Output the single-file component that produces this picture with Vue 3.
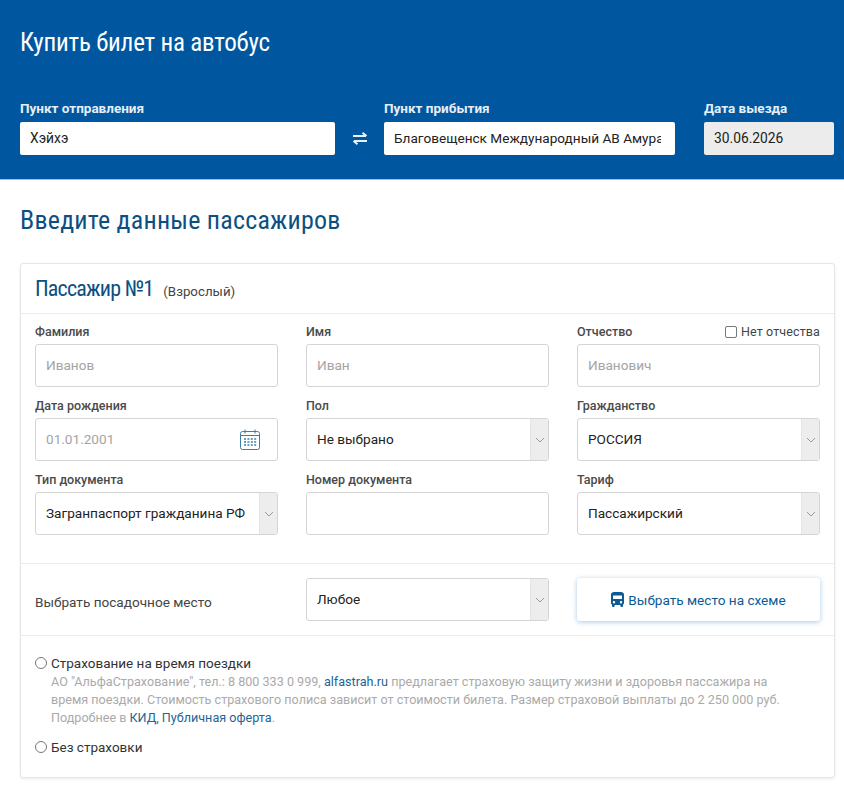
<script setup>
const fields = [
  { label: 'Фамилия', placeholder: 'Иванов' },
  { label: 'Имя', placeholder: 'Иван' },
  { label: 'Отчество', placeholder: 'Иванович', noMiddle: true },
  { label: 'Дата рождения', placeholder: '01.01.2001', date: true },
  { label: 'Пол', value: 'Не выбрано', select: true },
  { label: 'Гражданство', value: 'РОССИЯ', select: true },
  { label: 'Тип документа', value: 'Загранпаспорт гражданина РФ', select: true },
  { label: 'Номер документа', value: '' },
  { label: 'Тариф', value: 'Пассажирский', select: true }
]
</script>

<template>
  <div class="page">
    <header class="hero">
      <h1 class="hero-title">Купить билет на автобус</h1>
      <div class="search">
        <div class="search-field from">
          <label class="search-label">Пункт отправления</label>
          <div class="search-input">Хэйхэ</div>
        </div>
        <div class="swap">
          <svg width="16" height="13" viewBox="0 0 16 13" fill="none" stroke="#eaf1f7" stroke-width="2">
            <path d="M1 4h13M10.500 .8 14.500 4" />
            <path d="M15 9H2M5.500 12.200 1.500 9" />
          </svg>
        </div>
        <div class="search-field to">
          <label class="search-label">Пункт прибытия</label>
          <div class="search-input"><span class="clip">Благовещенск Международный АВ Амура</span></div>
        </div>
        <div class="search-field when">
          <label class="search-label">Дата выезда</label>
          <div class="search-input disabled">30.06.2026</div>
        </div>
      </div>
    </header>

    <main class="content">
      <h2 class="section-title">Введите данные пассажиров</h2>

      <section class="card">
        <div class="card-head">
          <span class="card-title">Пассажир №1</span>
          <span class="card-sub">(Взрослый)</span>
        </div>

        <div class="grid">
          <div v-for="f in fields" :key="f.label" class="field">
            <div class="field-top">
              <label class="field-label">{{ f.label }}</label>
              <span v-if="f.noMiddle" class="check-wrap"><i class="check"></i>Нет отчества</span>
            </div>
            <div class="control">
              <span v-if="f.placeholder" class="placeholder">{{ f.placeholder }}</span>
              <span v-else class="value">{{ f.value }}</span>
              <svg v-if="f.date" class="cal" width="20" height="21" viewBox="0 0 20 21" fill="none" stroke="#3d7ea6" stroke-width="1">
                <rect x=".5" y="2.500" width="19" height="18" rx="2" />
                <path d="M.5 6.500h19M5 .5v4M15 .5v4" />
                <path stroke-width="1.500" stroke-dasharray="2 1.400" d="M4 10h12.500M4 13h12.500M4 16h12.500" />
              </svg>
              <span v-if="f.select" class="arrow">
                <svg width="10" height="6" viewBox="0 0 10 6" fill="none" stroke="#9a9a9a" stroke-width="1"><path d="M1 1l4 4 4-4" /></svg>
              </span>
            </div>
          </div>
        </div>

        <div class="seat-row">
          <span class="seat-label">Выбрать посадочное место</span>
          <div class="control">
            <span class="value">Любое</span>
            <span class="arrow">
              <svg width="10" height="6" viewBox="0 0 10 6" fill="none" stroke="#9a9a9a" stroke-width="1"><path d="M1 1l4 4 4-4" /></svg>
            </span>
          </div>
          <button class="scheme-btn" type="button">
            <svg width="13" height="15" viewBox="0 0 13 15" fill="#0b5a94">
              <path fill-rule="evenodd" d="M3 0h7c1.700 0 3 1 3 2.500V11c0 .7-.3 1.200-1 1.500V14a1 1 0 0 1-1 1h-.6a1 1 0 0 1-1-1v-1H3.600v1a1 1 0 0 1-1 1H2a1 1 0 0 1-1-1v-1.500C.3 12.200 0 11.700 0 11V2.500C0 1 1.300 0 3 0zM2 3.500V7h9V3.500H2zM3 9a1.200 1.200 0 1 0 0 2.400A1.200 1.200 0 0 0 3 9zm7 0a1.200 1.200 0 1 0 0 2.400A1.200 1.200 0 0 0 10 9z" />
            </svg>
            Выбрать место на схеме
          </button>
        </div>

        <div class="insurance">
          <div class="radio-line"><i class="radio"></i>Страхование на время поездки</div>
          <p class="ins-text">
            АО "АльфаСтрахование", тел.: 8 800 333 0 999, <a class="link">alfastrah.ru</a> предлагает страховую защиту жизни и здоровья пассажира на время поездки. Стоимость страхового полиса зависит от стоимости билета. Размер страховой выплаты до 2 250 000 руб. Подробнее в <a class="link">КИД</a><a class="link">, Публичная оферта</a>.
          </p>
          <div class="radio-line second"><i class="radio"></i>Без страховки</div>
        </div>
      </section>
    </main>
  </div>
</template>

<style>
html, body { margin: 0; background: #fff; }
</style>

<style scoped>
.page {
  width: 844px;
  height: 800px;
  overflow: hidden;
  font-family: Roboto, "Liberation Sans", sans-serif;
  color: #333;
}
.hero {
  box-sizing: border-box;
  height: 180px;
  padding: 28px 10px 0 20px;
  background: #00579f;
  border-bottom: 1px solid #8fc0e6;
}
.hero-title {
  margin: 0;
  font-size: 25px;
  line-height: 30px;
  font-weight: 400;
  font-stretch: 75%;
  letter-spacing: -0.2px;
  color: #fff;
}
.search {
  display: flex;
  margin-top: 42px;
}
.search-field { display: flex; flex-direction: column; }
.from { width: 315px; }
.to { width: 291px; }
.when { width: 130px; margin-left: 29px; }
.swap {
  width: 49px;
  height: 33px;
  margin-top: 22px;
  display: flex;
  align-items: center;
  justify-content: center;
}
.swap svg { display: block; }
.search-label {
  height: 22px;
  line-height: 17px;
  font-size: 13.500px;
  font-weight: 700;
  color: #e6eef6;
}
.search-input {
  box-sizing: border-box;
  height: 33px;
  padding: 0 10px;
  line-height: 33px;
  font-size: 13.800px;
  color: #222;
  background: #fff;
  border-radius: 2px;
  white-space: nowrap;
}
.clip { display: block; overflow: hidden; margin-right: 4px; font-size: 13.600px; }
.disabled { background: #ececec; }
.content { padding: 0 9px 0 20px; }
.section-title {
  margin: 24px 0 0;
  font-size: 26px;
  line-height: 32px;
  font-weight: 400;
  font-stretch: 75%;
  letter-spacing: .22px;
  color: #0c4f82;
}
.card {
  box-sizing: border-box;
  height: 515px;
  margin-top: 27px;
  border: 1px solid #e6e6e6;
  border-radius: 3px;
  box-shadow: 0 1px 3px rgba(0, 0, 0, .08);
  background: #fff;
}
.card-head {
  display: flex;
  align-items: baseline;
  height: 50px;
  padding: 0 14px;
  box-sizing: border-box;
  line-height: 49px;
  border-bottom: 1px solid #ececec;
}
.card-title {
  font-size: 22px;
  font-stretch: 75%;
  letter-spacing: -0.8px;
  color: #0c4f82;
}
.card-sub { margin-left: 10px; font-size: 13.300px; color: #444; }
.grid {
  display: grid;
  grid-template-columns: 243px 243px 243px;
  column-gap: 28px;
  row-gap: 10px;
  padding: 9px 14px 28px;
  border-bottom: 1px solid #ececec;
}
.field-top {
  display: flex;
  justify-content: space-between;
  height: 21px;
  line-height: 18px;
}
.field-label { font-size: 12.500px; font-weight: 500; color: #4a4a4a; }
.check-wrap {
  display: flex;
  align-items: center;
  height: 18px;
  font-size: 12.500px;
  letter-spacing: .13px;
  color: #444;
}
.check {
  box-sizing: border-box;
  width: 12px;
  height: 12px;
  margin-right: 4px;
  border: 1px solid #777;
  border-radius: 2px;
}
.control {
  position: relative;
  box-sizing: border-box;
  height: 43px;
  padding: 0 10px;
  line-height: 41px;
  border: 1px solid #d5d5d5;
  border-radius: 3px;
  font-size: 13.600px;
  background: #fff;
}
.placeholder { color: #a4a4a4; }
.value { color: #222; }
.cal { position: absolute; right: 17px; top: 10px; }
.arrow {
  position: absolute;
  top: 0;
  right: 0;
  bottom: 0;
  width: 17px;
  display: flex;
  align-items: center;
  justify-content: center;
  background: #ededed;
  border-left: 1px solid #e4e4e4;
  border-radius: 0 2px 2px 0;
}
.seat-row {
  display: grid;
  grid-template-columns: 243px 243px 243px;
  column-gap: 28px;
  align-items: center;
  padding: 14px 14px;
  border-bottom: 1px solid #ececec;
}
.seat-label { font-size: 13.600px; color: #444; margin-top: 4px; }
.scheme-btn {
  height: 43px;
  display: flex;
  align-items: center;
  justify-content: center;
  gap: 4px;
  border: 0;
  border-radius: 3px;
  background: #fff;
  font: 400 13.600px Roboto, "Liberation Sans", sans-serif;
  color: #0c5a92;
  box-shadow: 0 1px 5px rgba(60, 130, 190, .45);
}
.insurance { padding: 18px 14px 0; }
.radio-line {
  display: flex;
  align-items: center;
  font-size: 13.500px;
  line-height: 18px;
  color: #333;
}
.radio {
  box-sizing: border-box;
  width: 12px;
  height: 12px;
  margin-right: 4px;
  border: 1px solid #777;
  border-radius: 50%;
}
.second { margin-top: 11px; }
.ins-text {
  margin: 1px 0 0 16px;
  max-width: 745px;
  font-size: 12.600px;
  line-height: 18px;
  color: #aaa;
}
.link { color: #1d6596; }
</style>
